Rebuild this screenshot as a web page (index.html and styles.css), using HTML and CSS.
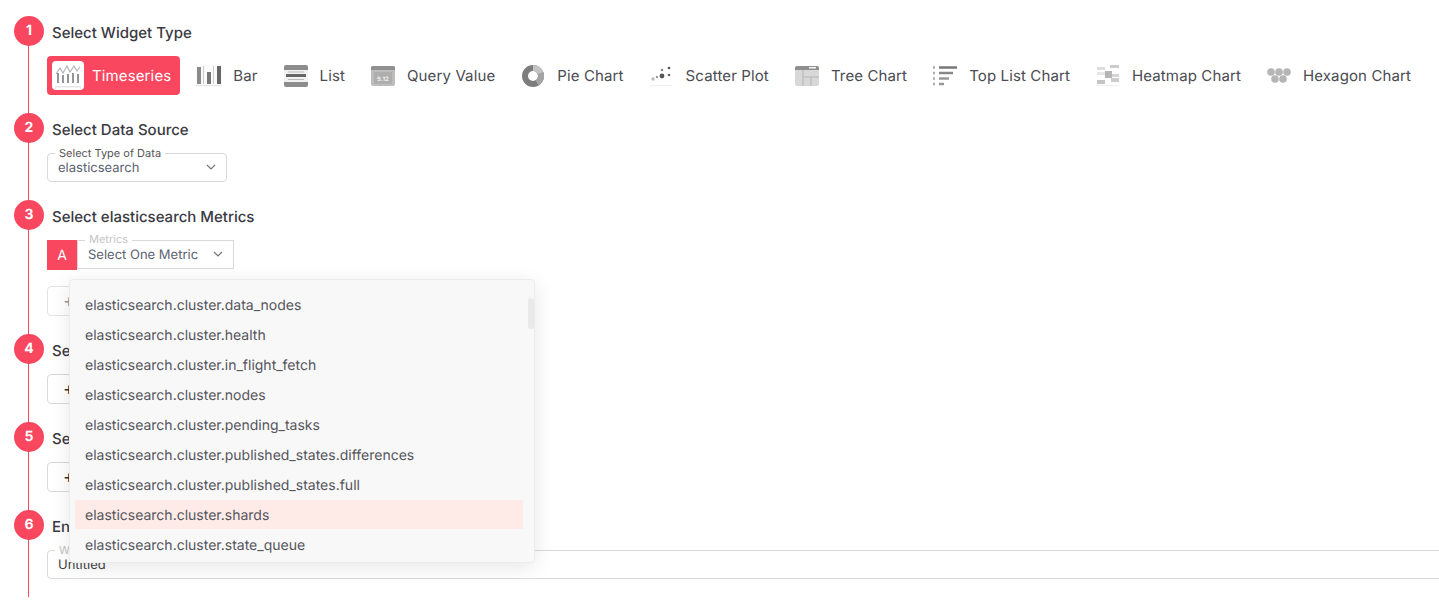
FILE: index.html
```html
<!DOCTYPE html>
<html lang="en">
<head>
<meta charset="utf-8">
<title>Widget builder</title>
<link rel="stylesheet" href="styles.css">
</head>
<body>
<main class="steps">
  <section class="step step-1">
    <header class="step-head"><span class="num">1</span><h2>Select Widget Type</h2></header>
    <div class="widgets">
      <div class="widget active"><span class="ico"><svg width="26" height="24" viewBox="0 0 26 24"><path d="M1 10 5 4l3 5 4-7 3 6 4-6 3 5 3-4" fill="none" stroke="#b5b5b5" stroke-width="1.200"/><path d="M3 9v10M8 11v8M13 10v9M18 9v10M23 10v9" stroke="#8a8a8a" stroke-width="1.800"/><rect x="0" y="22" width="26" height="1.500" fill="#e8e8e8"/></svg></span><span>Timeseries</span></div>
      <div class="widget"><span class="ico"><svg width="26" height="22" viewBox="0 0 26 22"><rect x="0" y="0" width="26" height="22" fill="#fafafa"/><rect x="1" y="2" width="4" height="17" fill="#8a8a8a"/><rect x="11" y="7" width="4" height="12" fill="#777"/><rect x="21" y="1" width="4" height="18" fill="#666"/><rect x="7" y="1" width="1" height="18" fill="#ccc"/><rect x="17" y="1" width="1" height="18" fill="#ccc"/><rect y="20" width="26" height="1" fill="#e6e6e6"/></svg></span><span>Bar</span></div>
      <div class="widget"><span class="ico"><svg width="24" height="22" viewBox="0 0 24 22"><rect width="24" height="22" rx="2" fill="#f1f1f1"/><path d="M0 2a2 2 0 0 1 2-2h20a2 2 0 0 1 2 2v3H0z" fill="#8d8d8d"/><path d="M0 17h24v3a2 2 0 0 1-2 2H2a2 2 0 0 1-2-2z" fill="#8d8d8d"/><rect x="2" y="9" width="20" height="3" fill="#666"/><path d="M4 7h16M4 14.500h16" stroke="#bbb"/></svg></span><span>List</span></div>
      <div class="widget"><span class="ico"><svg width="24" height="20" viewBox="0 0 24 20"><rect width="24" height="20" rx="2" fill="#bdbdbd"/><path d="M0 2a2 2 0 0 1 2-2h20a2 2 0 0 1 2 2v2H0z" fill="#8f8f8f"/><rect x="3" y="6" width="18" height="12" fill="#aeaeae"/><text x="12" y="15" class="qv">5.12</text></svg></span><span>Query Value</span></div>
      <div class="widget"><span class="ico"><svg width="22" height="22" viewBox="0 0 22 22"><circle cx="11" cy="11" r="8" fill="none" stroke="#7d7d7d" stroke-width="6"/><path d="M11 3a8 8 0 0 1 7.500 5.200" fill="none" stroke="#c4c4c4" stroke-width="6"/><path d="M18.500 8.200A8 8 0 0 1 15 18" fill="none" stroke="#a3a3a3" stroke-width="6"/></svg></span><span>Pie Chart</span></div>
      <div class="widget"><span class="ico"><svg width="24" height="22" viewBox="0 0 24 22"><circle cx="3" cy="14" r="1.700" fill="#bbb"/><circle cx="7" cy="12" r="1.200" fill="#999"/><circle cx="12" cy="11" r="2.400" fill="#555"/><circle cx="12" cy="5" r="1.300" fill="#888"/><circle cx="19" cy="10" r="1.300" fill="#666"/><circle cx="19" cy="3" r="1.300" fill="#555"/><rect y="20" width="22" height="1" fill="#eee"/></svg></span><span>Scatter Plot</span></div>
      <div class="widget"><span class="ico"><svg width="24" height="20" viewBox="0 0 24 20"><rect width="24" height="20" rx="2" fill="#d8d8d8"/><path d="M0 2a2 2 0 0 1 2-2h20a2 2 0 0 1 2 2v2H0z" fill="#8f8f8f"/><rect x="14" y="1" width="7" height="1.500" fill="#f5f5f5"/><path d="M8 4v16M8 11h16M16 11v9" stroke="#b5b5b5"/></svg></span><span>Tree Chart</span></div>
      <div class="widget"><span class="ico"><svg width="24" height="20" viewBox="0 0 24 20"><path d="M6 1.500h18" stroke="#777" stroke-width="2.500"/><path d="M6 7h14" stroke="#888" stroke-width="2.500"/><path d="M6 12.500h10" stroke="#999" stroke-width="2.500"/><path d="M6 18h5" stroke="#999" stroke-width="2.500"/><path d="M0 1.500h3M0 7h3M0 12.500h3M0 18h3" stroke="#aaa" stroke-width="2.500" stroke-dasharray="2 1"/></svg></span><span>Top List Chart</span></div>
      <div class="widget"><span class="ico"><svg width="22" height="22" viewBox="0 0 22 22"><rect y="2" width="8" height="3" fill="#ddd"/><rect x="13" y="0" width="9" height="3" fill="#ccc"/><rect y="7" width="11" height="3" fill="#e6e6e6"/><rect x="8" y="6" width="7" height="7" fill="#b5b5b5"/><rect x="15" y="9" width="7" height="3" fill="#d5d5d5"/><rect y="15" width="8" height="4" fill="#c4c4c4"/><rect x="14" y="13" width="8" height="4" fill="#ccc"/><rect y="20" width="22" height="1" fill="#eee"/></svg></span><span>Heatmap Chart</span></div>
      <div class="widget"><span class="ico"><svg width="24" height="18" viewBox="0 0 24 18"><g fill="#b5b5b5"><circle cx="4" cy="5" r="3.800"/><circle cx="12" cy="5" r="3.800"/><circle cx="20" cy="5" r="3.800"/><circle cx="8" cy="12" r="3.800"/><circle cx="16" cy="12" r="3.800"/></g></svg></span><span>Hexagon Chart</span></div>
    </div>
  </section>

  <section class="step step-2">
    <header class="step-head"><span class="num">2</span><h2>Select Data Source</h2></header>
    <div class="field select-source">
      <span class="legend">Select Type of Data</span>
      <span class="value">elasticsearch</span>
      <svg class="chev" width="10" height="6" viewBox="0 0 10 6"><path d="M1 1l4 4 4-4" fill="none" stroke="#777" stroke-width="1.200"/></svg>
    </div>
  </section>

  <section class="step step-3">
    <header class="step-head"><span class="num">3</span><h2>Select elasticsearch Metrics</h2></header>
    <div class="metric-row">
      <span class="query-tag">A</span>
      <div class="field metric">
        <span class="legend faint">Metrics</span>
        <span class="value">Select One Metric</span>
        <svg class="chev" width="10" height="6" viewBox="0 0 10 6"><path d="M1 1l4 4 4-4" fill="none" stroke="#777" stroke-width="1.200"/></svg>
      </div>
    </div>
    <button class="add">+ Add Metric</button>
    <div class="dropdown">
      <ul>
        <li>elasticsearch.cluster.data_nodes</li>
        <li>elasticsearch.cluster.health</li>
        <li>elasticsearch.cluster.in_flight_fetch</li>
        <li>elasticsearch.cluster.nodes</li>
        <li>elasticsearch.cluster.pending_tasks</li>
        <li>elasticsearch.cluster.published_states.differences</li>
        <li>elasticsearch.cluster.published_states.full</li>
        <li class="hover">elasticsearch.cluster.shards</li>
        <li>elasticsearch.cluster.state_queue</li>
      </ul>
      <span class="thumb"></span>
    </div>
  </section>

  <section class="step step-4">
    <header class="step-head"><span class="num">4</span><h2>Select Filters</h2></header>
    <button class="add dark">+ Add Filter</button>
  </section>

  <section class="step step-5">
    <header class="step-head"><span class="num">5</span><h2>Select Group By</h2></header>
    <button class="add dark">+ Add Group</button>
  </section>

  <section class="step step-6">
    <header class="step-head"><span class="num">6</span><h2>Enter Widget Name</h2></header>
    <div class="field name">
      <span class="legend faint">Widget Name</span>
      <span class="value dark-value">Untitled</span>
    </div>
  </section>
</main>
</body>
</html>
```
FILE: styles.css
```css
* { box-sizing: border-box; }
html, body { margin: 0; height: 609px; overflow: hidden; background: #fff; }
body { font-family: Inter, "Liberation Sans", sans-serif; color: #3a3a42; text-rendering: geometricPrecision; }

.steps { padding: 16px 0 0 14px; width: 1439px; }
.step { position: relative; }
.step::before {
  content: "";
  position: absolute;
  left: 14px;
  top: 20px;
  bottom: -10px;
  width: 1px;
  background: #f8475f;
}
.step-1 { height: 97px; }
.step-2 { height: 87px; }
.step-3 { height: 134px; }
.step-4 { height: 88px; }
.step-5 { height: 88px; }
.step-6 { height: 87px; }
.step-6::before { bottom: 0; }

.step-head { position: relative; display: flex; align-items: center; gap: 8px; height: 30px; }
.num {
  width: 30px; height: 30px; border-radius: 50%; padding-bottom: 2px;
  background: #f8475f; color: #fff;
  display: flex; align-items: center; justify-content: center;
  font-size: 14px; font-weight: 700;
}
h2 { margin: 0; padding-top: 3px; font-size: 15px; font-weight: 500; color: #3a3a42; line-height: 30px; }

.widgets { display: flex; gap: 8px; margin: 10px 0 0 33px; white-space: nowrap; }
.widget {
  display: flex; align-items: center; gap: 8px;
  height: 39px; padding: 5px 9px 5px 5px; border-radius: 4px;
  font-size: 15px; font-weight: 400; letter-spacing: 0.125px; color: #4b4b52;
}
.widget.active { background: #f8475f; color: #fff; }
.ico { width: 32px; height: 29px; flex: none; display: flex; align-items: center; justify-content: center; border-radius: 4px; }
.widget.active .ico { background: #fff; }
.qv { font: 700 6px Inter, sans-serif; fill: #eee; text-anchor: middle; }

.field { position: relative; display: flex; align-items: center; background: #fff; border: 1px solid #d9d9d9; font-size: 13px; }
.legend {
  position: absolute; top: -7px; left: 7px; padding: 0 4px;
  background: #fff; font-size: 11px; line-height: 12px; color: #555;
}
.legend.faint { color: #c4c4c4; }
.value { color: #5a6270; }
.dark-value { color: #444; }
.chev { position: absolute; right: 10px; top: 10px; }

.select-source { width: 180px; height: 29px; margin: 10px 0 0 33px; border-radius: 4px; padding: 0 10px; }
.metric-row { display: flex; margin: 10px 0 0 33px; }
.query-tag { width: 30px; height: 30px; background: #f8475f; color: #fff; display: flex; align-items: center; justify-content: center; font-size: 14px; }
.metric { width: 157px; height: 29px; padding: 0 10px; }
.metric .legend { left: 7px; top: -8px; }
.add {
  display: block; width: 120px; height: 30px; margin: 16px 0 0 33px; padding: 0 0 0 15px;
  background: #fff; border: 1px solid #e3e3e3; border-radius: 4px;
  font: 400 18px Inter, sans-serif; color: #999; text-align: left; white-space: nowrap; overflow: hidden;
}
.add.dark { margin-top: 10px; color: #333; border-color: #d9d9d9; }

.dropdown {
  position: absolute; left: 55px; top: 79px; z-index: 5;
  width: 466px; height: 284px; padding: 10px 0 0 5px;
  background: #f8f8f8; border: 1px solid #ececec; border-radius: 4px;
  box-shadow: 0 4px 20px rgba(0, 0, 0, 0.1);
  overflow: hidden;
}
.dropdown ul { list-style: none; margin: 0; padding: 0; width: 448px; }
.dropdown li { height: 30px; padding: 1px 10px 0; line-height: 29px; font-size: 14px; color: #55555c; white-space: nowrap; }
.dropdown li.hover { background: #feebe8; height: 29px; margin-bottom: 1px; }
.thumb { position: absolute; right: 0; top: 18px; width: 6px; height: 31px; border-radius: 3px; background: #e9e9e9; }

.name { width: 1400px; height: 29px; margin: 10px 0 0 33px; border-radius: 4px; padding: 0 10px; }
```
